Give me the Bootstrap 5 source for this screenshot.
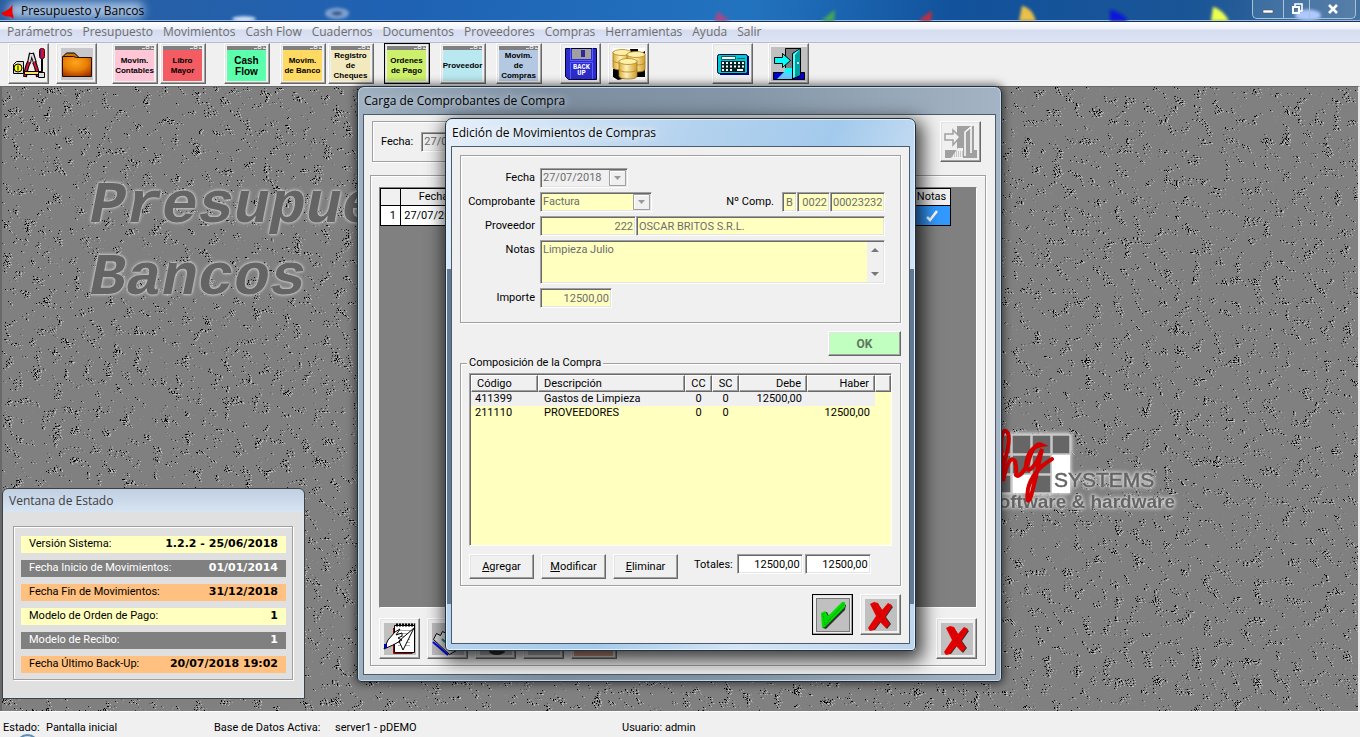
<!DOCTYPE html>
<html lang="es">
<head>
<meta charset="utf-8">
<meta name="viewport" content="width=device-width, initial-scale=1">
<title>Presupuesto y Bancos</title>
<link href="https://cdn.jsdelivr.net/npm/bootstrap@5.3.0/dist/css/bootstrap.min.css" rel="stylesheet">
<style>
:root{--face:#f0f0f0;--shade:#a0a0a0;--dark:#696969;--paper:#ffffc0}
body{font:11px/14px Roboto,"Liberation Sans",Arial,sans-serif;color:#000;background:var(--face)}
.ui-font{font-family:"Open Sans","Segoe UI",sans-serif;font-size:12px;line-height:16px}

/* main window chrome */
.app-title{height:22px;background:linear-gradient(100deg,#2a5ea0,#1f62b4 30%,#2273bf 55%,#12529c 70%,#1a5596 88%,#47739f);border-bottom:1px solid #12305a;box-shadow:inset 0 -1px #9dbbe0}
.app-title .sky{inset:0;width:100%;height:100%}
.win-ctl{height:19px;border:1px solid #a8c0d8;border-top:0;border-radius:0 0 5px 5px}
.win-ctl button{height:18px;width:26px;border:0;border-left:1px solid #a8c0d8;background:#ffffff18}
.win-ctl button:first-child{border-left:0;width:30px}
.win-ctl button:last-child{width:46px}
.menu-strip{height:21px;padding-left:7px;gap:10px;background:linear-gradient(#fff,#eef1f8 35%,#d5dcef 40%,#dfe5f5);border-bottom:1px solid #b6bccc;box-shadow:0 1px #fff,0 2px #8f8f8f}
.menu-strip a{color:#6d6d6d;text-decoration:none}
.tool-strip{height:43px;padding-left:8px;background:var(--face)}
.tool-strip .slot{width:48px;flex:none}
.gap-wide{margin-left:56px}

/* classic raised controls */
.raised{padding:0;color:#000;background:var(--face);border:1px solid;border-color:#fff var(--dark) var(--dark) #fff;box-shadow:inset -1px -1px var(--shade),inset 1px 1px #e3e3e3}
.sq{width:41px;height:41px;display:flex;align-items:center;justify-content:center}
.sq svg{display:block}
.tile{width:46px;height:41px;display:flex;flex-direction:column;padding:2px 3px 2px 2px;font-family:"Liberation Sans",Arial,sans-serif;font-weight:700;font-size:8px;line-height:10px}
.tile .strip{height:4px;background:#808080;display:block}
.tile .strip svg{display:block;margin-left:auto}
.tile .lbl{flex:1;display:flex;align-items:center;justify-content:center;text-align:center;white-space:nowrap}
.tile .lbl.big{font-size:10px;line-height:11px}
.focused{border-color:#000;outline:0}
.push{width:65px;height:25px}
.push::first-letter{text-decoration:underline}
.push-row{gap:7px}
.ok-btn{width:73px;height:25px;background:#c0ffc0;color:#607860;font-size:12px;font-weight:700}

.desk{background:gray;border-top:1px solid var(--dark);border-left:2px solid #696969;border-right:2px solid #e8e8e8;min-height:0}
.desk .grain{inset:0;width:100%;height:100%}
.wall-text{left:88px;top:83px;font:italic 700 60px/72px "Liberation Mono",monospace;color:#646464;text-shadow:0 0 2px #ccc,0 0 3px #ccc,0 0 4px #bbb;white-space:pre}
.brand{left:980px;top:338px}

/* floating windows */
.win{border:1px solid #20303f;border-radius:7px 7px 4px 4px;padding:0 5px 6px;display:flex;flex-direction:column}
.win .cap{height:27px;display:flex;align-items:center;white-space:nowrap;padding-left:1px}
.client{background:var(--face);border:1px solid #4b5b6b;flex:1;display:flex;flex-direction:column;min-height:0}
.w-carga{left:355px;top:-1px;width:645px;height:596px;background:linear-gradient(90deg,#9fb0c0,#7d8ea0 30%,#8496a7 60%,#a4b4c4);box-shadow:inset 0 0 0 1px #c8d6e4,0 0 8px 2px #0008}
.w-carga .client{padding:6px 9px 8px 6px}
.w-edit{left:443px;top:31px;width:471px;height:533px;background:linear-gradient(115deg,#e6f0fa,#b4d2ee 35%,#a3caec 55%,#d4e4f6 75%,#bdd4ee);box-shadow:inset 0 0 0 1px #e4f0fa,3px 6px 18px 4px #000b}
.w-edit .rail{top:150px;bottom:46px;width:4px;background:#607a93}
.w-edit .rail.l{left:1px}.w-edit .rail.r{right:1px}
.halo{text-shadow:0 0 6px #fff,0 0 8px #fff}
.halo-soft{text-shadow:0 0 6px #c4d0dc,0 0 8px #c4d0dc}
.w-state{left:0;top:401px;width:303px;height:211px;border-color:#404040;border-radius:6px 6px 0 0;padding:0 1px 1px;background:linear-gradient(#c0cfe2,#d8e5f3 24px)}
.w-state .cap{height:24px;padding:0 0 0 5px;color:#404040}
.w-state .body{flex:1;background:#e0e0e0;padding:14px 10px 17px 9px}
.w-state dl{gap:7px;padding:9px 6px 6px 7px}

.etch{border:1px solid var(--shade);box-shadow:1px 1px #fff,inset 1px 1px #fff;margin:0;padding:0;min-width:0}
.etch legend{float:none;width:auto;margin:0 0 0 6px;padding:0 2px;font-size:11px;line-height:14px;background:var(--face)}
.date-box{width:520px;height:41px}
.top-line{margin-bottom:13px;padding:0 5px 0 2px}
.sheet-box{padding:11px 8px 6px}
.icon-row{gap:7px;padding-top:10px}
.state-row{height:17px;padding:0 8px;line-height:15px}
.state-row dt{font-weight:400}
.state-row dd{margin:0;font:700 11px/15px "DejaVu Sans",sans-serif}
.bg-y{background:var(--paper)}.bg-g{background:gray;color:#fff}.bg-o{background:#ffc080}

/* sunken fields */
.fld{height:20px;min-width:0;padding:0 2px;border:1px solid;border-color:var(--shade) #fff #fff var(--shade);box-shadow:inset 1px 1px var(--dark),inset -1px -1px #e3e3e3;background-color:var(--paper);color:#6d6d6d;opacity:1;border-radius:0;font-size:11px;line-height:14px}
.fld.plain{background-color:var(--face)}
.fld.white{background-color:#fff;color:#000}
select.fld{appearance:none;background-repeat:no-repeat;background-position:right 1px center;background-image:url("data:image/svg+xml,%3Csvg xmlns='http://www.w3.org/2000/svg' width='17' height='16'%3E%3Cpath fill='%23f0f0f0' stroke='%23a0a0a0' d='M.5.5h16v15H.5z'/%3E%3Cpath stroke='%23fff' fill='none' d='M1.500 14V1.500H15'/%3E%3Cpath fill='%23999' d='M5 6h7L8.500 10z'/%3E%3C/svg%3E")}
.w-date{width:88px}.w-kind{width:112px}.w-letter{width:15px;text-align:center}.w-branch{width:33px}.w-num{width:55px}.w-code{width:96px}.w-amt{width:72px}.w-tot{width:66px}
.tot-pair{gap:2px}
.lines{display:grid;grid-template-columns:74px 1fr;gap:4px 5px;padding:12px 15px 14px 0}
.lines>label{text-align:right;line-height:20px}
.memo{height:44px;padding:1px}
.memo textarea{border:0;resize:none;background:none;padding:1px;color:#6d6d6d;overflow:hidden}
.memo .sb{width:16px;background:#f0f0f0}

/* tables */
.sheet{background:gray;border:1px solid;border-color:#808080 #fff #fff #808080}
.sheet table{width:571px;background:#fff;table-layout:fixed;border-collapse:collapse}
.sheet th{background:var(--face);font-weight:400;height:17px;line-height:14px;padding:0}
.sheet th,.sheet td{border:1px solid #000;text-align:center}
.sheet td{height:20px;padding:0}
.sheet td.on{background:#3399ff}
.ledger{height:173px;background:var(--paper);border:1px solid;border-color:var(--shade) #fff #fff var(--shade);box-shadow:inset 1px 1px var(--dark);padding:1px 0 0 1px;overflow:hidden}
.ledger-box{padding:3px 8px 6px}
.ledger table{width:100%;table-layout:fixed;border-collapse:separate;border-spacing:0}
.ledger th{height:17px;padding:0 5px;font-weight:400;line-height:14px;background:var(--face);border:1px solid;border-color:#fff var(--dark) var(--dark) #fff;box-shadow:inset -1px -1px var(--shade)}
.ledger td{height:14px;padding:0 4px;line-height:14px}
.ledger td:nth-child(2){padding-left:6px}
.ledger tr.sel td:not(:last-child){background:var(--face)}
.ledger .c{padding:0;text-align:center}
.ledger .r{padding:0 5px;text-align:right}

.status{height:26px;background:var(--face);border-top:1px solid #fff;white-space:nowrap;font-size:11px;overflow:hidden;padding:6px 0 0 3px}
.status span{line-height:16px}
.status .s1{width:43px}.status .s2{width:168px}.status .s3{width:121px}.status .s4{width:287px}
.orb{left:16px;top:22px;width:23px;height:23px;border-radius:50%;border:2px solid #5b8db5;background:#cfe2ee}
</style>
</head>
<body class="vh-100 d-flex flex-column overflow-hidden">
<svg width="0" height="0" class="position-absolute" aria-hidden="true">
  <defs>
    <symbol id="i-cross" viewBox="0 0 32 32">
      <path fill="#c0c0c0" d="M0 0h32v32H0z"/>
      <path fill="#303030" d="M9 6l4-1 5 7 6-7 4 3-7 10 5 7-4 5-6-7-6 8H4l9-13z"/>
      <path fill="#e80000" d="M5 5l4-2 4 1 4 7 6-7 4 2-1 3-6 9 5 7-4 4-6-6-6 8-4 1-2-3 8-12z"/>
      <path fill="none" stroke="#a80000" stroke-dasharray="1 1" d="M9 5l12 19M24 6L6 28M8 7l11 17"/>
    </symbol>
    <symbol id="i-check" viewBox="0 0 32 32">
      <path fill="#c0c0c0" d="M0 0h32v32H0z"/>
      <path fill="#303030" d="M6 14l4-1 2 4L27 5l2 1-1 5L9 30l-3-1z"/>
      <path fill="#00e000" d="M4 14l4-2 3 5L25 3h3v5L8 28l-3 1z"/>
      <path fill="none" stroke="#009000" stroke-dasharray="1 1" d="M6 15l2 11L26 6M9 19l2 3L27 5"/>
    </symbol>
    <symbol id="i-tiny" viewBox="0 0 12 4"><path fill="none" stroke="#ddd" d="M0 2.500h3M4 .5h3v2H4zM9 .5l2 2M9 2.500h3"/></symbol>
  </defs>
</svg>

<header class="app-title position-relative d-flex align-items-center justify-content-between flex-shrink-0">
  <svg class="sky position-absolute" viewBox="0 0 1360 22" preserveAspectRatio="none" aria-hidden="true">
    <defs><filter id="b3" x="-50%" y="-100%" width="200%" height="300%"><feGaussianBlur stdDeviation="5"/></filter><filter id="b1" x="-50%" y="-50%" width="200%" height="200%"><feGaussianBlur stdDeviation="1.5"/></filter></defs>
    <rect x="8" y="2" width="136" height="17" rx="8" fill="#b9cfe8" opacity=".85" filter="url(#b3)"/>
    <ellipse cx="244" cy="20" rx="12" ry="3" fill="#cfe0f4" filter="url(#b1)"/>
    <ellipse cx="337" cy="14" rx="12" ry="6" fill="#7ba0cf" filter="url(#b1)"/><ellipse cx="337" cy="14" rx="5" ry="2" fill="#334f80" filter="url(#b1)"/>
    <g filter="url(#b1)"><path fill="#a44a86" d="M714 22l4-10 12 10z"/><path fill="#45a45a" d="M821 22l14-12-1 12z"/><path fill="#c02f3f" d="M918 22l14-11-1 11z"/><path fill="#e8c04c" d="M1019 22l3-16q10 2 14 16z"/><path fill="#0a12d8" d="M1110 22l0-12q14 4 18 12z"/><path fill="#eaff50" d="M1211 22l2-15q10 3 16 15z"/><ellipse cx="1308" cy="16" rx="13" ry="6" fill="#a6c4ff"/></g>
  </svg>
  <div class="position-relative d-flex align-items-center ui-font">
    <svg width="21" height="20" viewBox="0 0 22 20" aria-hidden="true"><path fill="#f00000" d="M13 3q-2 6-12 9 3 4 10 4l3 2v-3l-1-3z"/></svg>
    <span>Presupuesto y Bancos</span>
  </div>
  <div class="win-ctl position-relative d-flex align-self-start me-1">
    <button class="p-0" aria-label="Minimizar"><svg width="14" height="12" class="d-block mx-auto"><path fill="#fff" stroke="#555" stroke-width=".6" d="M2 7h10v3H2z"/></svg></button>
    <button class="p-0" aria-label="Restaurar"><svg width="14" height="12" class="d-block mx-auto"><path fill="none" stroke="#fff" stroke-width="1.600" d="M5 3V1h7v7h-2"/><path fill="none" stroke="#fff" stroke-width="2" d="M3 4h6v6H3z"/></svg></button>
    <button class="p-0" aria-label="Cerrar"><svg width="14" height="12" class="d-block mx-auto"><path stroke="#fff" stroke-width="2.500" d="M3 2l8 8M11 2l-8 8"/></svg></button>
  </div>
</header>

<nav class="menu-strip ui-font d-flex align-items-center flex-shrink-0" aria-label="Menú">
  <a href="#">Parámetros</a><a href="#">Presupuesto</a><a href="#">Movimientos</a><a href="#">Cash Flow</a><a href="#">Cuadernos</a><a href="#">Documentos</a><a href="#">Proveedores</a><a href="#">Compras</a><a href="#">Herramientas</a><a href="#">Ayuda</a><a href="#">Salir</a>
</nav>

<div class="tool-strip d-flex flex-shrink-0" role="toolbar">
  <div class="slot"><button class="raised sq" aria-label="Parámetros">
    <svg width="34" height="34" viewBox="0 0 34 34"><path fill="#ddd" stroke="#000" d="M1.500 17.500l3-3h7v12h-10z"/><circle cx="6" cy="21" r="4" fill="#ff0" stroke="#000"/><path fill="none" stroke="#000" d="M6 18.500v5"/><path fill="none" stroke="#000" stroke-width="4" d="M19 6l-2 10M20 6l3 10"/><path fill="none" stroke="#ddd" stroke-width="2" d="M19 7l-2 9M20 7l3 9"/><path fill="none" stroke="#000" stroke-width="4" d="M17 15q-3 6-4 15M22 15q3 6 4 15"/><path fill="none" stroke="#e0103a" stroke-width="2" d="M17 15q-3 6-4 14M22 15q3 6 4 14"/><path fill="#ffe05a" stroke="#000" d="M12.500 24.500h18v3h-18z"/><rect x="27.500" y="1.500" width="5" height="10" rx="2" fill="#d01030" stroke="#400"/><path fill="#22b" d="M28 3h1v7h-1z"/><path fill="#ddd" stroke="#000" d="M29.500 12v12h1V12zM26.500 25.500h6v5h-6z"/></svg></button></div>
  <div class="slot"><button class="raised sq" aria-label="Abrir carpeta">
    <svg width="34" height="34" viewBox="0 0 34 34"><defs><radialGradient id="fo" cx=".45" cy=".3" r=".8"><stop offset="0" stop-color="#ffa51c"/><stop offset=".5" stop-color="#e88005"/><stop offset="1" stop-color="#9c2c00"/></radialGradient></defs><path fill="#c8c8cc" d="M1 1h32v32H1z"/><path fill="#c87810" stroke="#000" d="M3.500 12V9l3-3h8l4 4v3z"/><path fill="url(#fo)" stroke="#2a0c00" d="M2.500 9.500h11l3 1h15v19h-29z"/></svg></button></div>
  <div class="slot ms-2"><button class="raised tile"><span class="strip"><svg width="12" height="4"><use href="#i-tiny"/></svg></span><span class="lbl" style="background:#ffc6d8">Movim.<br>Contables</span></button></div>
  <div class="slot"><button class="raised tile"><span class="strip"><svg width="12" height="4"><use href="#i-tiny"/></svg></span><span class="lbl" style="background:#f25c62">Libro<br>Mayor</span></button></div>
  <div class="slot ms-3"><button class="raised tile"><span class="strip"><svg width="12" height="4"><use href="#i-tiny"/></svg></span><span class="lbl big" style="background:#5cffac">Cash<br>Flow</span></button></div>
  <div class="slot ms-2"><button class="raised tile"><span class="strip"><svg width="12" height="4"><use href="#i-tiny"/></svg></span><span class="lbl" style="background:#ffda62">Movim.<br>de Banco</span></button></div>
  <div class="slot"><button class="raised tile"><span class="strip"><svg width="12" height="4"><use href="#i-tiny"/></svg></span><span class="lbl" style="background:#f3e9be">Registro<br>de<br>Cheques</span></button></div>
  <div class="slot ms-2"><button class="raised tile focused"><span class="strip"><svg width="12" height="4"><use href="#i-tiny"/></svg></span><span class="lbl" style="background:#cdf06c">Ordenes<br>de Pago</span></button></div>
  <div class="slot ms-2"><button class="raised tile"><span class="strip"><svg width="12" height="4"><use href="#i-tiny"/></svg></span><span class="lbl" style="background:#b9e8f0">Proveedor</span></button></div>
  <div class="slot ms-2"><button class="raised tile"><span class="strip"><svg width="12" height="4"><use href="#i-tiny"/></svg></span><span class="lbl" style="background:#b4c8e2">Movim.<br>de<br>Compras</span></button></div>
  <div class="slot ms-3"><button class="raised sq" aria-label="Back up">
    <svg width="32" height="32" viewBox="0 0 32 32"><path fill="#2c2cc8" stroke="#000040" d="M.5.5h31v31H3.500l-3-3z"/><path fill="#a0a0a0" d="M7 1h19v10H7z"/><path fill="#2c2c90" d="M16 2h4v7h-4z"/><path fill="none" stroke="#5a5aff" d="M5.500 0v12.500h22V0M5.500 31V14.500h22V31"/><g fill="#fff" font-family="Liberation Mono,monospace" font-weight="700" font-size="7" text-anchor="middle"><text x="16.500" y="21">BACK</text><text x="16.500" y="27">UP</text></g></svg></button></div>
  <div class="slot"><button class="raised sq" aria-label="Bases de datos">
    <svg width="34" height="34" viewBox="0 0 34 34"><path fill="#fff" d="M1 1h32v32H1z"/><path fill="#000" d="M18 2h8v6l7-4v26H20l-14 3-5-3v-8l20-8z"/><defs><linearGradient id="cy"><stop offset="0" stop-color="#d9a936"/><stop offset=".4" stop-color="#fff3b8"/><stop offset="1" stop-color="#cf9c2c"/></linearGradient><g id="drum"><path fill="url(#cy)" stroke="#a87a1a" stroke-width=".8" d="M0 3v15q0 3 9 3t9-3V3z"/><ellipse cx="9" cy="3.500" rx="9" ry="3" fill="#fff0a8" stroke="#b08420" stroke-width=".8"/><path fill="none" stroke="#b08420" stroke-width=".8" d="M0 11q0 3 9 3t9-3"/></g></defs><use href="#drum" x="1" y="2"/><use href="#drum" x="15" y="4"/><use href="#drum" x="7" y="11"/></svg></button></div>
  <div class="slot gap-wide"><button class="raised sq" aria-label="Calculadora">
    <svg width="32" height="32" viewBox="0 0 32 32"><path fill="#0000a0" d="M2 8h30v19H3z"/><rect x=".5" y="6.500" width="30" height="19" rx="2" fill="#00c8d8" stroke="#003"/><path fill="#fff" stroke="#066" d="M4.500 8.500h14v3h-14z"/><path stroke="#066" stroke-width="1" d="M20 10.500h8"/><path fill="#022" d="M4 13h24v11H4z"/><path stroke="#fff" stroke-width="2" stroke-dasharray="2 2" d="M5 15h22M5 18.500h22M5 22h12"/><path fill="#fff" d="M20 21h6v2h-6z"/></svg></button></div>
  <div class="slot ms-2"><button class="raised sq" aria-label="Salir">
    <svg width="36" height="34" viewBox="0 0 36 34"><path fill="#c0c0c0" d="M0 0h36v34H0z"/><path fill="#808080" stroke="#000" d="M14.500 1.500h15v26h-15z"/><path fill="#0000d8" stroke="#000" d="M2.500 25.500h31v7h-31z"/><path fill="#6cf" d="M6 32l7-7h9v7z"/><path fill="#0ff" d="M14 21h7v5h-7z"/><path fill="#00a0a0" stroke="#000" d="M21.500 32V6.500l8-5v27z"/><path fill="#5ff" d="M22 31V7l7-5-5 6v22z"/><circle cx="27" cy="16" r="1" fill="#fff"/><path fill="#0ff" stroke="#000" d="M3.500 10.500h8v-4l8 7-8 7v-4h-8z"/></svg></button></div>
</div>

<main class="desk position-relative flex-grow-1">
  <svg class="grain position-absolute" aria-hidden="true">
    <filter id="grain" x="0" y="0" width="100%" height="100%" color-interpolation-filters="sRGB">
      <feTurbulence type="fractalNoise" baseFrequency=".82 .78" numOctaves="2" seed="7" result="fine"/>
      <feTurbulence type="fractalNoise" baseFrequency=".1" numOctaves="1" seed="3" result="coarse"/>
      <feComposite in="fine" in2="coarse" operator="arithmetic" k2=".6" k3=".5" result="mix"/>
      <feColorMatrix in="mix" values="0 0 0 0 0  0 0 0 0 0  0 0 0 0 0  0 0 0 24 -17" result="ink"/>
      <feOffset in="mix" dx="2" dy="1" result="moved"/>
      <feColorMatrix in="moved" values="0 0 0 0 .74  0 0 0 0 .74  0 0 0 0 .74  0 0 0 24 -16.700" result="chalk"/>
      <feMerge><feMergeNode in="chalk"/><feMergeNode in="ink"/></feMerge>
    </filter>
    <rect width="100%" height="100%" filter="url(#grain)"/>
  </svg>
  <div class="wall-text position-absolute">Presupue
Bancos</div>
  <svg class="brand position-absolute" width="220" height="96" viewBox="0 0 220 96">
    <g style="filter:drop-shadow(0 0 2px #ddd) drop-shadow(0 0 1px #ccc)">
      <g fill="#666" stroke="#c8c8c8" stroke-width="1.500"><path d="M10 10h19v19H10zM30 10h19v19H30zM50 10h19v19H50zM70 10h18v19H70zM10 30h19v19H10zM30 30h19v19H30zM50 30h19v19H50zM10 50h19v18H10zM50 50h19v18H50z"/><path fill="#fff" stroke="none" d="M70 30h18v38H70zM31 50h18v18H31z"/></g>
      <g fill="#646464" font-family="Liberation Sans,Arial,sans-serif"><text x="72" y="62" font-size="21" stroke="#646464" stroke-width=".5">SYSTEMS</text><text x="4" y="83" font-size="19" font-weight="700">Software &amp; hardware</text></g>
    </g>
    <path fill="none" stroke="#d40000" stroke-width="4" stroke-linecap="round" d="M14 60Q30 20 26 8 20 0 19 20L21 56Q27 28 33 36 35 44 34 50 38 54 46 38 52 16 60 20 46 22 44 40 46 52 56 34L60 24Q52 62 48 74 44 80 46 64 50 46 70 34"/>
  </svg>

  <section class="win w-carga position-absolute" aria-label="Carga de Comprobantes de Compra">
    <div class="cap ui-font halo-soft">Carga de Comprobantes de Compra</div>
    <div class="client">
      <div class="top-line d-flex justify-content-between align-items-end">
        <div class="etch date-box d-flex align-items-center gap-2 ps-2"><label for="cf">Fecha:</label><input id="cf" class="fld plain w-date" value="27/07/2018" disabled></div>
        <button class="raised sq" disabled aria-label="Salir"><svg width="34" height="34" viewBox="0 0 34 34"><path fill="#a0a0a0" d="M13 1h17v25H13zM1 25h32v8H1z"/><path fill="#f0f0f0" d="M7 33l7-10h5v10z"/><path stroke="#a0a0a0" stroke-dasharray="1 1" d="M6 31h13M8 29h11M10 27h9"/><path fill="#a0a0a0" stroke="#fff" stroke-width="1.500" d="M21 31V7l6-5v26"/><path fill="#f0f0f0" stroke="#a0a0a0" stroke-width="1.500" d="M1 9h8V5l7 7-7 8v-5H1z"/></svg></button>
      </div>
      <div class="etch sheet-box flex-grow-1 d-flex flex-column">
        <div class="sheet flex-grow-1">
          <table>
            <colgroup><col style="width:20px"><col style="width:66px"><col><col style="width:38px"></colgroup>
            <thead><tr><th></th><th>Fecha</th><th></th><th>Notas</th></tr></thead>
            <tbody><tr><td class="bg-transparent text-end pe-1">1</td><td>27/07/2018</td><td></td><td class="on"><svg width="14" height="12" class="d-block mx-auto" role="img" aria-label="Con notas"><path fill="none" stroke="#fff" stroke-width="2.500" d="M2 7l3 3 7-9"/></svg></td></tr></tbody>
          </table>
        </div>
        <div class="icon-row d-flex">
          <button class="raised sq" aria-label="Nuevo"><svg width="34" height="34" viewBox="0 0 34 34"><path fill="#c0c0c0" d="M1 1h32v32H1z"/><path fill="#fff" stroke="#000" d="M11.500 3.500h20v27h-20z"/><path stroke="#900" d="M10.500 6v25.500h19" fill="none"/><path stroke="#000" stroke-width="3" stroke-dasharray="2 1" d="M13 3h19"/><path stroke="#aaa" d="M15 8.500h14M15 11.500h14M15 14.500h12M15 17.500h12M15 20.500h12M15 23.500h12"/><path fill="#fff" stroke="#000" d="M31 6L20 28l-4-9zM1 27l4-9 7-8 5-3-4 6 6-2v3l-4 2 4 2-9 5z"/><path fill="#00a" d="M1 22h3v4H1z"/></svg></button>
          <button class="raised sq" aria-label="Editar"><svg width="34" height="34" viewBox="0 0 34 34"><path fill="#c0c0c0" d="M1 1h32v32H1z"/><path fill="#ddd" stroke="#000" d="M2.500 17.500l3-6 4 2 2-4 4 2 3-2 14 15-14 8z"/><path stroke="#00f" stroke-width="2" d="M2 20l15 13" fill="none"/><path stroke="#088" stroke-width="2" d="M11 17l3 3"/></svg></button>
          <button class="raised sq" aria-label="Consultar"><svg width="34" height="34"><path fill="#c0c0c0" d="M1 1h32v32H1z"/><ellipse cx="18" cy="29" rx="8" ry="4" fill="#333"/></svg></button>
          <button class="raised sq" aria-label="Imprimir"><svg width="34" height="34"><path fill="#c0c0c0" d="M1 1h32v32H1z"/></svg></button>
          <button class="raised tile" aria-label="Anular"><span class="lbl" style="background:#d8a088"></span></button>
          <button class="raised sq ms-auto" aria-label="Cancelar"><svg width="32" height="32"><use href="#i-cross"/></svg></button>
        </div>
      </div>
    </div>
  </section>

  <section class="win w-edit position-absolute" aria-label="Edición de Movimientos de Compras">
    <i class="rail l position-absolute"></i><i class="rail r position-absolute"></i>
    <div class="cap ui-font halo">Edición de Movimientos de Compras</div>
    <div class="client position-relative px-2 pt-1 pb-1">
      <div class="etch mt-1">
        <div class="lines">
          <label for="fe">Fecha</label><div class="d-flex"><select id="fe" class="fld plain w-date" disabled><option>27/07/2018</option></select></div>
          <label for="co">Comprobante</label>
          <div class="d-flex"><select id="co" class="fld w-kind" disabled><option>Factura</option></select>
            <div class="d-flex ms-auto align-items-center"><label for="nc" class="me-2">Nº Comp.</label><input id="nc" class="fld w-letter p-0" value="B" disabled><input class="fld w-branch text-end" value="0022" aria-label="Sucursal" disabled><input class="fld w-num text-end" value="00023232" aria-label="Número" disabled></div></div>
          <label for="pr">Proveedor</label><div class="d-flex"><input id="pr" class="fld w-code text-end" value="222" disabled><input class="fld flex-grow-1" value="OSCAR BRITOS S.R.L." aria-label="Nombre del proveedor" disabled></div>
          <label for="no">Notas</label><div class="fld memo d-flex"><textarea id="no" class="flex-grow-1" disabled>Limpieza Julio</textarea><div class="sb d-flex flex-column justify-content-between align-items-center py-1"><svg width="8" height="8"><path fill="#777" d="M4 2l4 4H0z"/></svg><svg width="8" height="8"><path fill="#777" d="M0 2h8L4 6z"/></svg></div></div>
          <label for="im">Importe</label><div class="d-flex"><input id="im" class="fld w-amt text-end" value="12500,00" disabled></div>
        </div>
      </div>
      <div class="d-flex justify-content-end pt-2"><button class="raised ok-btn" disabled>OK</button></div>
      <fieldset class="etch">
        <legend>Composición de la Compra</legend>
        <div class="ledger-box">
          <div class="ledger">
            <table>
              <colgroup><col style="width:67px"><col style="width:147px"><col style="width:27px"><col style="width:27px"><col style="width:68px"><col style="width:68px"><col></colgroup>
              <thead><tr><th>Código</th><th>Descripción</th><th class="c">CC</th><th class="c">SC</th><th class="r">Debe</th><th class="r">Haber</th><th></th></tr></thead>
              <tbody>
                <tr class="sel"><td>411399</td><td>Gastos de Limpieza</td><td class="c">0</td><td class="c">0</td><td class="r">12500,00</td><td class="r"></td><td></td></tr>
                <tr><td>211110</td><td>PROVEEDORES</td><td class="c">0</td><td class="c">0</td><td class="r"></td><td class="r">12500,00</td><td></td></tr>
              </tbody>
            </table>
          </div>
          <div class="d-flex align-items-start pt-2">
            <div class="push-row d-flex me-3"><button class="raised push">Agregar</button><button class="raised push">Modificar</button><button class="raised push">Eliminar</button></div>
            <label for="td" class="mt-1 me-1">Totales:</label>
            <div class="tot-pair d-flex"><input id="td" class="fld white w-tot text-end" value="12500,00"><input class="fld white w-tot text-end" value="12500,00" aria-label="Total haber"></div>
          </div>
        </div>
      </fieldset>
      <div class="push-row d-flex justify-content-end pt-2">
        <button class="raised sq focused" aria-label="Aceptar"><svg width="34" height="34" viewBox="0 0 34 34"><use href="#i-check" x="1" y="1" width="32" height="32"/><path fill="none" stroke="#000" stroke-dasharray="1 1" d="M.5.5h33v33H.5z"/></svg></button>
        <button class="raised sq" aria-label="Cancelar"><svg width="32" height="32"><use href="#i-cross"/></svg></button>
      </div>
    </div>
  </section>

  <section class="win w-state position-absolute" aria-label="Ventana de Estado">
    <div class="cap ui-font">Ventana de Estado</div>
    <div class="body">
      <dl class="etch d-flex flex-column mb-0">
        <div class="state-row bg-y d-flex justify-content-between"><dt>Versión Sistema:</dt><dd>1.2.2 - 25/06/2018</dd></div>
        <div class="state-row bg-g d-flex justify-content-between"><dt>Fecha Inicio de Movimientos:</dt><dd>01/01/2014</dd></div>
        <div class="state-row bg-o d-flex justify-content-between"><dt>Fecha Fin de Movimientos:</dt><dd>31/12/2018</dd></div>
        <div class="state-row bg-y d-flex justify-content-between"><dt>Modelo de Orden de Pago:</dt><dd>1</dd></div>
        <div class="state-row bg-g d-flex justify-content-between"><dt>Modelo de Recibo:</dt><dd>1</dd></div>
        <div class="state-row bg-o d-flex justify-content-between"><dt>Fecha Último Back-Up:</dt><dd>20/07/2018 19:02</dd></div>
      </dl>
    </div>
  </section>
</main>

<footer class="status position-relative d-flex align-items-center flex-shrink-0">
  <span class="s1">Estado:</span><span class="s2">Pantalla inicial</span><span class="s3">Base de Datos Activa:</span><span class="s4">server1 - pDEMO</span><span>Usuario: admin</span>
  <i class="orb position-absolute"></i>
</footer>
<script src="https://cdn.jsdelivr.net/npm/bootstrap@5.3.0/dist/js/bootstrap.bundle.min.js"></script>
</body>
</html>
